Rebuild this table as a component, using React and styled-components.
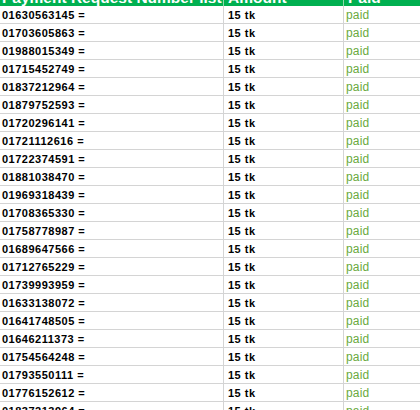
import { Fragment } from "react";
import styled, { createGlobalStyle } from "styled-components";

const GlobalStyle = createGlobalStyle`
  html, body {
    margin: 0;
    padding: 0;
    background: #ffffff;
    overflow: hidden;
  }
`;

// 시트 전체
const Sheet = styled.div`
  display: grid;
  grid-template-columns: 224px 120px 1fr;
  width: 420px;
  margin-top: -18px;
  font-family: "Liberation Sans", Arial, sans-serif;
`;

// 머리줄 칸
const HeadCell = styled.div`
  display: flex;
  align-items: flex-end;
  height: 24px;
  box-sizing: border-box;
  padding-left: ${(props) => (props.$pad ? props.$pad : 2)}px;
  background: #00b050;
  color: #ffffff;
  font-weight: bold;
  font-size: 15.5px;
  line-height: 17px;
  white-space: nowrap;
  overflow: hidden;
  border-right: ${(props) => (props.$last ? "none" : "1px solid #8fd8ad")};
`;

// 일반 칸
const Cell = styled.div`
  height: 18px;
  box-sizing: border-box;
  padding-top: 1px;
  padding-left: ${(props) => (props.$pad ? props.$pad : 2)}px;
  line-height: 17px;
  font-size: ${(props) => (props.$paid ? "12px" : "11px")};
  letter-spacing: ${(props) => (props.$paid ? "0.2px" : "0.5px")};
  font-weight: ${(props) => (props.$paid ? "normal" : "bold")};
  color: ${(props) => (props.$paid ? "#6aaa40" : "#000000")};
  border-bottom: 1px solid #d4d4d4;
  border-right: ${(props) => (props.$last ? "none" : "1px solid #d4d4d4")};
  white-space: nowrap;
  overflow: hidden;
`;

const numbers = [
  "01630563145",
  "01703605863",
  "01988015349",
  "01715452749",
  "01837212964",
  "01879752593",
  "01720296141",
  "01721112616",
  "01722374591",
  "01881038470",
  "01969318439",
  "01708365330",
  "01758778987",
  "01689647566",
  "01712765229",
  "01739993959",
  "01633138072",
  "01641748505",
  "01646211373",
  "01754564248",
  "01793550111",
  "01776152612",
  "01837213964",
];

export default function App() {
  return (
    <>
      <GlobalStyle />
      <Sheet>
        <HeadCell>Payment Request Number list</HeadCell>
        <HeadCell $pad={4}>Amount</HeadCell>
        <HeadCell $pad={4} $last>
          Paid
        </HeadCell>
        {numbers.map((num) => (
          <Fragment key={num}>
            <Cell>{num} =</Cell>
            <Cell $pad={4}>15 tk</Cell>
            <Cell $paid $last>
              paid
            </Cell>
          </Fragment>
        ))}
      </Sheet>
    </>
  );
}
